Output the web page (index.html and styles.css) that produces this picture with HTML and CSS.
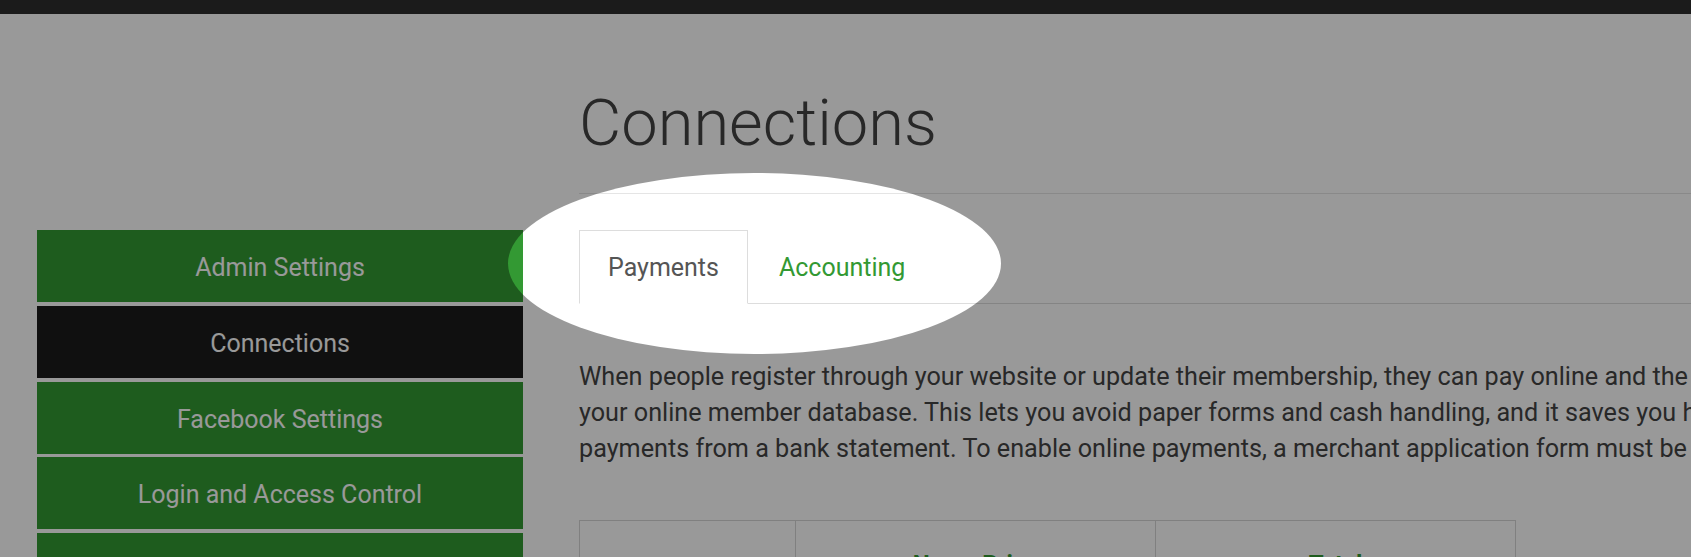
FILE: index.html
```html
<!DOCTYPE html>
<html>
<head>
    <title>Connections</title>
    <link rel="stylesheet" href="styles.css">
</head>
<body>
    <div class="topbar"></div>

    <div class="page">
        <div class="page-head">
            <h1>Connections</h1>
        </div>

        <ul class="sidebar">
            <li><a href="#">Admin Settings</a></li>
            <li><a href="#" class="active">Connections</a></li>
            <li><a href="#">Facebook Settings</a></li>
            <li><a href="#">Login and Access Control</a></li>
            <li><a href="#">Membership Settings</a></li>
        </ul>

        <div class="content">
            <ul class="tabs">
                <li><a href="#" class="active">Payments</a></li>
                <li><a href="#">Accounting</a></li>
            </ul>

            <p class="intro">
                When people register through your website or update their membership, they can pay online and the payment is recorded in<br>
                your online member database. This lets you avoid paper forms and cash handling, and it saves you hours of matching up<br>
                payments from a bank statement. To enable online payments, a merchant application form must be submitted.
            </p>

            <table class="providers">
                <colgroup>
                    <col class="col-label">
                    <col class="col-wide">
                    <col class="col-wide">
                </colgroup>
                <thead>
                    <tr><th></th><th>Name Price</th><th>Total</th></tr>
                </thead>
                <tbody>
                    <tr><td>Provider</td><td>Stripe</td><td>PayPal</td></tr>
                </tbody>
            </table>
        </div>
    </div>

    <!-- tour spotlight over the tabs -->
    <div class="spotlight"></div>
</body>
</html>
```

FILE: styles.css
```css
html, body {
    margin: 0;
    overflow: hidden;
}

body {
    font-family: Roboto, 'Liberation Sans', sans-serif;
    background: #fff;
    color: #444;
}

.topbar {
    height: 14px;
    background: #2d2d2d;
}

.page {
    display: grid;
    grid-template-columns: 486px 1400px;
    column-gap: 56px;
    padding: 71px 0 0 37px;
}

.page-head {
    grid-column: 2;
    grid-row: 1;
}

.page-head h1 {
    margin: 0 0 36px;
    padding-bottom: 31px;
    border-bottom: 1px solid #e5e5e5;
    font-size: 65px;
    font-weight: 300;
    line-height: 77px;
    color: #444;
}

.sidebar {
    grid-column: 1;
    grid-row: 2;
    list-style: none;
    margin: 0;
    padding: 0;
}

.sidebar a {
    display: block;
    box-sizing: border-box;
    height: 72px;
    padding-top: 4px;
    line-height: 68px;
    margin-bottom: 3.75px;
    background: #339933;
    color: #fff;
    text-align: center;
    font-size: 25px;
    text-decoration: none;
}

.sidebar a.active {
    background: #1c1c1c;
}

.content {
    grid-column: 2;
    grid-row: 2;
}

.tabs {
    display: flex;
    list-style: none;
    margin: 0;
    padding: 0;
    border-bottom: 1px solid #ddd;
}

.tabs li {
    margin-bottom: -1px;
}

.tabs a {
    display: block;
    padding: 22px 28px 20px;
    line-height: 30px;
    font-size: 25px;
    border: 1px solid transparent;
    color: #339933;
    text-decoration: none;
}

.tabs a.active {
    color: #555;
    background: #fff;
    border-color: #ddd #ddd #fff;
}

.tabs li + li a {
    padding-left: 30px;
}

.intro {
    margin: 55px 0 0;
    font-size: 25.2px;
    line-height: 36px;
}

.providers {
    margin-top: 53px;
    width: 936px;
    border-collapse: collapse;
    table-layout: fixed;
}

.col-label {
    width: 216px;
}

.col-wide {
    width: 360px;
}

.providers th, .providers td {
    border: 1px solid #d5d5d5;
    padding: 25px 10px;
    font-size: 24px;
    line-height: 36px;
    text-align: center;
}

.providers th {
    color: #339933;
    font-weight: 700;
}

.spotlight {
    position: absolute;
    left: 508px;
    top: 173px;
    width: 493px;
    height: 181px;
    border-radius: 50%;
    box-shadow: 0 0 0 3000px rgba(0, 0, 0, 0.4);
    pointer-events: none;
}
```
